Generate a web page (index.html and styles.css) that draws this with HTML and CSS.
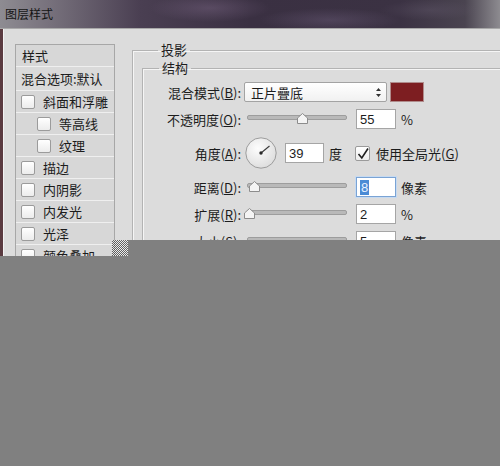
FILE: index.html
```html
<!DOCTYPE html>
<html lang="zh-CN">
<head>
    <meta charset="UTF-8">
    <title>图层样式</title>
    <link rel="stylesheet" href="styles.css">
</head>
<body>

    <div class="window">
        <!-- Titelbalk -->
        <div class="titlebar">图层样式</div>

        <div class="dialog">
            <!-- Stijlenlijst links -->
            <aside class="styles-list">
                <div class="list-head">样式</div>
                <div class="list-row blend">混合选项:默认</div>
                <div class="list-row"><span class="box"></span>斜面和浮雕</div>
                <div class="list-row sub"><span class="box"></span>等高线</div>
                <div class="list-row sub"><span class="box"></span>纹理</div>
                <div class="list-row"><span class="box"></span>描边</div>
                <div class="list-row"><span class="box"></span>内阴影</div>
                <div class="list-row"><span class="box"></span>内发光</div>
                <div class="list-row"><span class="box"></span>光泽</div>
                <div class="list-row"><span class="box"></span>颜色叠加</div>
            </aside>

            <!-- Instellingen -->
            <section class="panel">
                <fieldset class="group outer">
                    <legend>投影</legend>
                    <fieldset class="group inner">
                        <legend>结构</legend>

                        <div class="row">
                            <span class="label">混合模式(<u>B</u>):</span>
                            <div class="select">
                                <span>正片疊底</span>
                                <svg class="arrows" width="5" height="9" viewBox="0 0 5 9">
                                    <path d="M2.5 0 L5 3 L0 3 Z M0 6 L5 6 L2.5 9 Z" fill="#333"/>
                                </svg>
                            </div>
                            <span class="swatch"></span>
                        </div>

                        <div class="row">
                            <span class="label">不透明度(<u>O</u>):</span>
                            <div class="slider">
                                <span class="track"></span>
                                <svg class="thumb" style="left: 50px" width="11" height="11" viewBox="0 0 11 11">
                                    <path d="M0.5 10.5 L0.5 5 L5.5 0.5 L10.5 5 L10.5 10.5 Z" fill="#f4f4f4" stroke="#8c8c8c"/>
                                </svg>
                            </div>
                            <span class="field">55</span>
                            <span class="unit">%</span>
                        </div>

                        <div class="row angle">
                            <span class="label">角度(<u>A</u>):</span>
                            <svg class="dial" width="32" height="32" viewBox="0 0 32 32">
                                <defs>
                                    <radialGradient id="dialFill" cx="40%" cy="35%" r="70%">
                                        <stop offset="0" stop-color="#fdfdfd"/>
                                        <stop offset="1" stop-color="#dcdcdc"/>
                                    </radialGradient>
                                </defs>
                                <circle cx="16" cy="16" r="15.2" fill="url(#dialFill)" stroke="#9c9c9c"/>
                                <line x1="16" y1="16" x2="24.5" y2="9" stroke="#3a3a3a" stroke-width="1.1"/>
                                <circle cx="16" cy="16" r="1.7" fill="#2a2a2a"/>
                            </svg>
                            <span class="field short">39</span>
                            <span class="unit">度</span>
                            <span class="check">
                                <svg width="14" height="14" viewBox="0 0 14 14">
                                    <path d="M2.5 7 L5.8 11 L12 1.5" fill="none" stroke="#1e1e1e" stroke-width="1.6"/>
                                </svg>
                            </span>
                            <span class="check-label">使用全局光(<u>G</u>)</span>
                        </div>

                        <div class="row">
                            <span class="label">距离(<u>D</u>):</span>
                            <div class="slider">
                                <span class="track"></span>
                                <svg class="thumb" style="left: 2px" width="11" height="11" viewBox="0 0 11 11">
                                    <path d="M0.5 10.5 L0.5 5 L5.5 0.5 L10.5 5 L10.5 10.5 Z" fill="#f4f4f4" stroke="#8c8c8c"/>
                                </svg>
                            </div>
                            <span class="field focused"><span class="sel">8</span></span>
                            <span class="unit">像素</span>
                        </div>

                        <div class="row">
                            <span class="label">扩展(<u>R</u>):</span>
                            <div class="slider">
                                <span class="track"></span>
                                <svg class="thumb" style="left: -3px" width="11" height="11" viewBox="0 0 11 11">
                                    <path d="M0.5 10.5 L0.5 5 L5.5 0.5 L10.5 5 L10.5 10.5 Z" fill="#f4f4f4" stroke="#8c8c8c"/>
                                </svg>
                            </div>
                            <span class="field">2</span>
                            <span class="unit">%</span>
                        </div>

                        <div class="row">
                            <span class="label">大小(<u>S</u>):</span>
                            <div class="slider">
                                <span class="track"></span>
                            </div>
                            <span class="field">5</span>
                            <span class="unit">像素</span>
                        </div>
                    </fieldset>
                </fieldset>
            </section>
        </div>
    </div>

    <!-- Grijs vlak over de onderkant -->
    <div class="cover"></div>
    <div class="checker"></div>

</body>
</html>
```

FILE: styles.css
```css
body {
    margin: 0;
    padding: 0;
    width: 500px;
    height: 466px;
    overflow: hidden;
    position: relative;
    background-color: #808080;
    font-family: "Noto Sans CJK SC", "Liberation Sans", sans-serif;
    font-size: 13px;
    color: #1c1c1c;
}

/* Venster */
.window {
    height: 256px;
    overflow: hidden;
}

.titlebar {
    height: 28px;
    line-height: 28px;
    padding-left: 5px;
    font-size: 12px;
    color: #141414;
    border-bottom: 1px solid #a9a9a9;
    background:
        radial-gradient(ellipse 60px 14px at 210px 8px, rgba(120, 100, 130, 0.45), transparent),
        radial-gradient(ellipse 70px 12px at 330px 20px, rgba(110, 95, 125, 0.4), transparent),
        radial-gradient(ellipse 50px 10px at 430px 10px, rgba(100, 90, 110, 0.35), transparent),
        linear-gradient(to right, #8e8c92 0%, #77717c 10%, #4a3f52 28%, #3a3042 50%, #3b3243 80%, #4a4450 93%, #8d8b90 100%);
}

.dialog {
    display: flex;
    align-items: flex-start;
    height: 230px;
    padding: 12px 0 0 12px;
    border-left: 3px solid #5a3a40;
    box-shadow: inset 1px 0 0 #f2f2f2;
    background-color: #dcdcdc;
}

/* Stijlenlijst */
.styles-list {
    flex: none;
    width: 98px;
    margin-top: 3px;
    border: 1px solid #a7a7a7;
    background-color: #d7d7d7;
}

.list-head, .list-row {
    display: flex;
    align-items: center;
    height: 21px;
    padding-left: 6px;
    border-bottom: 1px solid #efefef;
    line-height: 1;
    white-space: nowrap;
}

.list-row.blend {
    height: 23px;
    background-color: #dadada;
}

.list-row {
    padding-left: 5px;
}

.list-row.sub {
    padding-left: 21px;
}

.box {
    flex: none;
    width: 12px;
    height: 12px;
    margin-right: 8px;
    border: 1px solid #9b9b9b;
    border-radius: 2px;
    background: linear-gradient(#ffffff, #ececec);
}

/* Instellingen */
.panel {
    flex: none;
    width: 400px;
    margin-left: 17px;
}

fieldset.group {
    margin: 0;
    padding: 0;
    border: 1px solid #b3b3b3;
    box-shadow: inset 1px 1px 0 #f5f5f5, 1px 1px 0 #f5f5f5;
}

fieldset.group legend {
    margin-left: 16px;
    padding: 0 3px;
    font-size: 13px;
    line-height: 18px;
}

fieldset.outer {
    padding: 0 0 0 9px;
}

fieldset.inner {
    padding-top: 5px;
    padding-bottom: 20px;
}

.row {
    display: flex;
    align-items: center;
    height: 20px;
    margin-bottom: 7px;
    white-space: nowrap;
    line-height: 1;
}

.row.angle {
    height: 34px;
}

.label {
    flex: none;
    width: 98px;
    margin-right: 3px;
    text-align: right;
}

.select {
    display: flex;
    align-items: center;
    justify-content: space-between;
    box-sizing: border-box;
    width: 143px;
    height: 20px;
    padding: 0 5px 0 6px;
    border: 1px solid #a3a3a3;
    border-radius: 2px;
    background: linear-gradient(#ffffff, #f1f1f1);
}

.swatch {
    box-sizing: border-box;
    width: 34px;
    height: 20px;
    margin-left: 3px;
    border: 1px solid #b08c8c;
    background-color: #7d1e21;
}

/* Schuifregelaar */
.slider {
    position: relative;
    flex: none;
    width: 100px;
    height: 20px;
    margin: 0 9px 0 3px;
}

.track {
    position: absolute;
    left: 0;
    right: 0;
    top: 6px;
    height: 3px;
    border: 1px solid #9d9d9d;
    border-radius: 2px;
    background-color: #b9b9b9;
}

.thumb {
    position: absolute;
    top: 4px;
}

.field {
    box-sizing: border-box;
    width: 40px;
    height: 20px;
    padding: 3px 0 0 3px;
    border: 1px solid #a5a5a5;
    background-color: #fff;
    font-family: "Liberation Sans", sans-serif;
    font-size: 13px;
}

.field.short {
    width: 39px;
    margin-left: 8px;
}

.field.focused {
    border-color: #7aa3d4;
    box-shadow: 0 0 0 1px #c6daf1;
}

.sel {
    background-color: #4b8bd5;
    color: #e9f1ff;
    padding: 0 1px;
}

.unit {
    margin-left: 5px;
}

.dial {
    flex: none;
    margin-left: 1px;
}

.check {
    box-sizing: border-box;
    width: 15px;
    height: 15px;
    margin-left: 13px;
    border: 1px solid #9b9b9b;
    border-radius: 2px;
    background: linear-gradient(#ffffff, #ececec);
}

.check svg {
    display: block;
}

.check-label {
    margin-left: 6px;
}

/* Overlappend grijs vlak en ruitjes */
.cover {
    position: absolute;
    left: 128px;
    top: 240px;
    width: 372px;
    height: 16px;
    background-color: #808080;
}

.checker {
    position: absolute;
    left: 112px;
    top: 240px;
    width: 16px;
    height: 16px;
    background:
        repeating-conic-gradient(#3a3a3a 0 25%, #f0f0f0 0 50%) 0 0 / 2px 2px;
    opacity: 0.75;
}
```
